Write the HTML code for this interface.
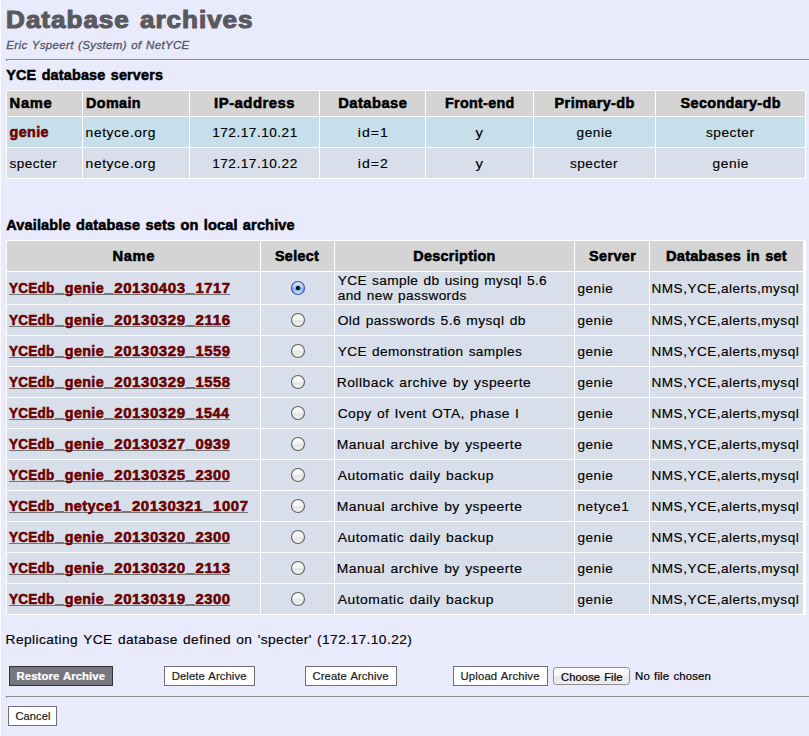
<!DOCTYPE html>
<html><head><meta charset="utf-8"><title>Database archives</title>
<style>
html,body{margin:0;padding:0;background:#EAEAFD;width:809px;height:736px;overflow:hidden;}
svg{display:block;position:absolute;left:0;top:0;}
text{font-family:"Liberation Sans", sans-serif;}
</style></head>
<body>
<svg width="809" height="736" viewBox="0 0 809 736">
<defs>
<linearGradient id="rsel" x1="0" y1="0" x2="0" y2="1">
<stop offset="0" stop-color="#DCEEFF"/><stop offset="0.4" stop-color="#A6D0FA"/><stop offset="0.55" stop-color="#78B4EE"/><stop offset="1" stop-color="#C8F2FF"/>
</linearGradient>
<linearGradient id="rnorm" x1="0" y1="0" x2="0" y2="1">
<stop offset="0" stop-color="#FFFFFF"/><stop offset="0.5" stop-color="#F2F2F2"/><stop offset="0.55" stop-color="#E4E4E4"/><stop offset="1" stop-color="#F4F4F4"/>
</linearGradient>
<linearGradient id="cf" x1="0" y1="0" x2="0" y2="1">
<stop offset="0" stop-color="#FFFFFF"/><stop offset="0.5" stop-color="#F4F4F4"/><stop offset="0.55" stop-color="#E6E6E6"/><stop offset="1" stop-color="#EFEFEF"/>
</linearGradient>
</defs>
<rect x="0" y="0" width="1" height="736" fill="#FBFBFF"/>
<rect x="6" y="59" width="803" height="1" fill="#8A8A8A"/>
<rect x="7" y="60" width="802" height="1" fill="#EDEDF0"/>
<rect x="6" y="60" width="1" height="1" fill="#8A8A8A"/>
<rect x="6" y="90" width="800" height="89" fill="#FFFFFF"/>
<rect x="7" y="91" width="75" height="25" fill="#D4D4D4"/>
<rect x="7" y="117" width="75" height="30" fill="#C6DFEB"/>
<rect x="7" y="148" width="75" height="30" fill="#D8DFEA"/>
<rect x="83" y="91" width="106" height="25" fill="#D4D4D4"/>
<rect x="83" y="117" width="106" height="30" fill="#C6DFEB"/>
<rect x="83" y="148" width="106" height="30" fill="#D8DFEA"/>
<rect x="190" y="91" width="129" height="25" fill="#D4D4D4"/>
<rect x="190" y="117" width="129" height="30" fill="#C6DFEB"/>
<rect x="190" y="148" width="129" height="30" fill="#D8DFEA"/>
<rect x="320" y="91" width="105" height="25" fill="#D4D4D4"/>
<rect x="320" y="117" width="105" height="30" fill="#C6DFEB"/>
<rect x="320" y="148" width="105" height="30" fill="#D8DFEA"/>
<rect x="426" y="91" width="107" height="25" fill="#D4D4D4"/>
<rect x="426" y="117" width="107" height="30" fill="#C6DFEB"/>
<rect x="426" y="148" width="107" height="30" fill="#D8DFEA"/>
<rect x="534" y="91" width="121" height="25" fill="#D4D4D4"/>
<rect x="534" y="117" width="121" height="30" fill="#C6DFEB"/>
<rect x="534" y="148" width="121" height="30" fill="#D8DFEA"/>
<rect x="656" y="91" width="149" height="25" fill="#D4D4D4"/>
<rect x="656" y="117" width="149" height="30" fill="#C6DFEB"/>
<rect x="656" y="148" width="149" height="30" fill="#D8DFEA"/>
<rect x="6" y="240" width="800" height="375" fill="#FFFFFF"/>
<rect x="7" y="241" width="253" height="30" fill="#D4D4D4"/>
<rect x="7" y="272" width="253" height="32" fill="#D8DFEA"/>
<rect x="7" y="305" width="253" height="30" fill="#D8DFEA"/>
<rect x="7" y="336" width="253" height="30" fill="#D8DFEA"/>
<rect x="7" y="367" width="253" height="30" fill="#D8DFEA"/>
<rect x="7" y="398" width="253" height="30" fill="#D8DFEA"/>
<rect x="7" y="429" width="253" height="30" fill="#D8DFEA"/>
<rect x="7" y="460" width="253" height="30" fill="#D8DFEA"/>
<rect x="7" y="491" width="253" height="30" fill="#D8DFEA"/>
<rect x="7" y="522" width="253" height="30" fill="#D8DFEA"/>
<rect x="7" y="553" width="253" height="30" fill="#D8DFEA"/>
<rect x="7" y="584" width="253" height="30" fill="#D8DFEA"/>
<rect x="261" y="241" width="73" height="30" fill="#D4D4D4"/>
<rect x="261" y="272" width="73" height="32" fill="#D8DFEA"/>
<rect x="261" y="305" width="73" height="30" fill="#D8DFEA"/>
<rect x="261" y="336" width="73" height="30" fill="#D8DFEA"/>
<rect x="261" y="367" width="73" height="30" fill="#D8DFEA"/>
<rect x="261" y="398" width="73" height="30" fill="#D8DFEA"/>
<rect x="261" y="429" width="73" height="30" fill="#D8DFEA"/>
<rect x="261" y="460" width="73" height="30" fill="#D8DFEA"/>
<rect x="261" y="491" width="73" height="30" fill="#D8DFEA"/>
<rect x="261" y="522" width="73" height="30" fill="#D8DFEA"/>
<rect x="261" y="553" width="73" height="30" fill="#D8DFEA"/>
<rect x="261" y="584" width="73" height="30" fill="#D8DFEA"/>
<rect x="335" y="241" width="239" height="30" fill="#D4D4D4"/>
<rect x="335" y="272" width="239" height="32" fill="#D8DFEA"/>
<rect x="335" y="305" width="239" height="30" fill="#D8DFEA"/>
<rect x="335" y="336" width="239" height="30" fill="#D8DFEA"/>
<rect x="335" y="367" width="239" height="30" fill="#D8DFEA"/>
<rect x="335" y="398" width="239" height="30" fill="#D8DFEA"/>
<rect x="335" y="429" width="239" height="30" fill="#D8DFEA"/>
<rect x="335" y="460" width="239" height="30" fill="#D8DFEA"/>
<rect x="335" y="491" width="239" height="30" fill="#D8DFEA"/>
<rect x="335" y="522" width="239" height="30" fill="#D8DFEA"/>
<rect x="335" y="553" width="239" height="30" fill="#D8DFEA"/>
<rect x="335" y="584" width="239" height="30" fill="#D8DFEA"/>
<rect x="575" y="241" width="74" height="30" fill="#D4D4D4"/>
<rect x="575" y="272" width="74" height="32" fill="#D8DFEA"/>
<rect x="575" y="305" width="74" height="30" fill="#D8DFEA"/>
<rect x="575" y="336" width="74" height="30" fill="#D8DFEA"/>
<rect x="575" y="367" width="74" height="30" fill="#D8DFEA"/>
<rect x="575" y="398" width="74" height="30" fill="#D8DFEA"/>
<rect x="575" y="429" width="74" height="30" fill="#D8DFEA"/>
<rect x="575" y="460" width="74" height="30" fill="#D8DFEA"/>
<rect x="575" y="491" width="74" height="30" fill="#D8DFEA"/>
<rect x="575" y="522" width="74" height="30" fill="#D8DFEA"/>
<rect x="575" y="553" width="74" height="30" fill="#D8DFEA"/>
<rect x="575" y="584" width="74" height="30" fill="#D8DFEA"/>
<rect x="650" y="241" width="153" height="30" fill="#D4D4D4"/>
<rect x="650" y="272" width="153" height="32" fill="#D8DFEA"/>
<rect x="650" y="305" width="153" height="30" fill="#D8DFEA"/>
<rect x="650" y="336" width="153" height="30" fill="#D8DFEA"/>
<rect x="650" y="367" width="153" height="30" fill="#D8DFEA"/>
<rect x="650" y="398" width="153" height="30" fill="#D8DFEA"/>
<rect x="650" y="429" width="153" height="30" fill="#D8DFEA"/>
<rect x="650" y="460" width="153" height="30" fill="#D8DFEA"/>
<rect x="650" y="491" width="153" height="30" fill="#D8DFEA"/>
<rect x="650" y="522" width="153" height="30" fill="#D8DFEA"/>
<rect x="650" y="553" width="153" height="30" fill="#D8DFEA"/>
<rect x="650" y="584" width="153" height="30" fill="#D8DFEA"/>
<rect x="9" y="294" width="221" height="1" fill="#747474"/>
<rect x="55.0" y="293" width="9.1" height="2" fill="#757575"/>
<rect x="104.1" y="293" width="9.4" height="2" fill="#757575"/>
<rect x="185.6" y="293" width="9.2" height="2" fill="#757575"/>
<circle cx="298" cy="288.0" r="6.5" fill="url(#rsel)" stroke="#4A4A8E" stroke-width="1.1"/>
<circle cx="298" cy="288.0" r="2.2" fill="#0A0A14"/>
<rect x="9" y="326" width="221" height="1" fill="#747474"/>
<rect x="55.0" y="325" width="9.1" height="2" fill="#757575"/>
<rect x="104.1" y="325" width="9.4" height="2" fill="#757575"/>
<rect x="185.6" y="325" width="9.2" height="2" fill="#757575"/>
<circle cx="298" cy="320.0" r="6.5" fill="url(#rnorm)" stroke="#616161" stroke-width="1.1"/>
<rect x="9" y="357" width="221" height="1" fill="#747474"/>
<rect x="55.0" y="356" width="9.1" height="2" fill="#757575"/>
<rect x="104.1" y="356" width="9.4" height="2" fill="#757575"/>
<rect x="185.6" y="356" width="9.2" height="2" fill="#757575"/>
<circle cx="298" cy="351.0" r="6.5" fill="url(#rnorm)" stroke="#616161" stroke-width="1.1"/>
<rect x="9" y="388" width="221" height="1" fill="#747474"/>
<rect x="55.0" y="387" width="9.1" height="2" fill="#757575"/>
<rect x="104.1" y="387" width="9.4" height="2" fill="#757575"/>
<rect x="185.6" y="387" width="9.2" height="2" fill="#757575"/>
<circle cx="298" cy="382.0" r="6.5" fill="url(#rnorm)" stroke="#616161" stroke-width="1.1"/>
<rect x="9" y="419" width="221" height="1" fill="#747474"/>
<rect x="55.0" y="418" width="9.1" height="2" fill="#757575"/>
<rect x="104.1" y="418" width="9.4" height="2" fill="#757575"/>
<rect x="185.6" y="418" width="9.2" height="2" fill="#757575"/>
<circle cx="298" cy="413.0" r="6.5" fill="url(#rnorm)" stroke="#616161" stroke-width="1.1"/>
<rect x="9" y="450" width="221" height="1" fill="#747474"/>
<rect x="55.0" y="449" width="9.1" height="2" fill="#757575"/>
<rect x="104.1" y="449" width="9.4" height="2" fill="#757575"/>
<rect x="185.6" y="449" width="9.2" height="2" fill="#757575"/>
<circle cx="298" cy="444.0" r="6.5" fill="url(#rnorm)" stroke="#616161" stroke-width="1.1"/>
<rect x="9" y="481" width="221" height="1" fill="#747474"/>
<rect x="55.0" y="480" width="9.1" height="2" fill="#757575"/>
<rect x="104.1" y="480" width="9.4" height="2" fill="#757575"/>
<rect x="185.6" y="480" width="9.2" height="2" fill="#757575"/>
<circle cx="298" cy="475.0" r="6.5" fill="url(#rnorm)" stroke="#616161" stroke-width="1.1"/>
<rect x="9" y="512" width="239" height="1" fill="#747474"/>
<rect x="55.0" y="511" width="8.8" height="2" fill="#757575"/>
<rect x="121.5" y="511" width="9.8" height="2" fill="#757575"/>
<rect x="202.7" y="511" width="9.7" height="2" fill="#757575"/>
<circle cx="298" cy="506.0" r="6.5" fill="url(#rnorm)" stroke="#616161" stroke-width="1.1"/>
<rect x="9" y="543" width="221" height="1" fill="#747474"/>
<rect x="55.0" y="542" width="9.1" height="2" fill="#757575"/>
<rect x="104.1" y="542" width="9.4" height="2" fill="#757575"/>
<rect x="185.6" y="542" width="9.2" height="2" fill="#757575"/>
<circle cx="298" cy="537.0" r="6.5" fill="url(#rnorm)" stroke="#616161" stroke-width="1.1"/>
<rect x="9" y="574" width="221" height="1" fill="#747474"/>
<rect x="55.0" y="573" width="9.1" height="2" fill="#757575"/>
<rect x="104.1" y="573" width="9.4" height="2" fill="#757575"/>
<rect x="185.6" y="573" width="9.2" height="2" fill="#757575"/>
<circle cx="298" cy="568.0" r="6.5" fill="url(#rnorm)" stroke="#616161" stroke-width="1.1"/>
<rect x="9" y="605" width="221" height="1" fill="#747474"/>
<rect x="55.0" y="604" width="9.1" height="2" fill="#757575"/>
<rect x="104.1" y="604" width="9.4" height="2" fill="#757575"/>
<rect x="185.6" y="604" width="9.2" height="2" fill="#757575"/>
<circle cx="298" cy="599.0" r="6.5" fill="url(#rnorm)" stroke="#616161" stroke-width="1.1"/>
<rect x="9.5" y="666.5" width="103" height="19" fill="#76767F" stroke="#333333" stroke-width="1"/>
<rect x="164.5" y="666.5" width="90" height="19" fill="#FFFFFF" stroke="#6E6E76" stroke-width="1"/>
<rect x="305.5" y="666.5" width="91" height="19" fill="#FFFFFF" stroke="#6E6E76" stroke-width="1"/>
<rect x="453.5" y="666.5" width="94" height="19" fill="#FFFFFF" stroke="#6E6E76" stroke-width="1"/>
<rect x="553.5" y="667.5" width="76" height="17" rx="3" ry="3" fill="url(#cf)" stroke="#8C8C8C" stroke-width="1"/>
<rect x="6" y="696" width="803" height="1" fill="#8A8A8A"/>
<rect x="7" y="697" width="802" height="1" fill="#EDEDF0"/>
<rect x="6" y="697" width="1" height="1" fill="#8A8A8A"/>
<rect x="8.5" y="706.5" width="48" height="19" fill="#FFFFFF" stroke="#6E6E76" stroke-width="1"/>
<text transform="translate(6.11 27.50) scale(1.0851 1.0)" font-size="24" font-weight="bold" fill="#59595F" stroke="#59595F" stroke-width="1.1" style="letter-spacing:0.914px;word-spacing:1.800px;">Database archives</text>
<text transform="translate(6.30 48.70) scale(1.0528 1.0)" font-size="11" font-style="italic" fill="#55555F" stroke="#55555F" stroke-width="0.3" style="letter-spacing:0.298px;word-spacing:0.825px;">Eric Yspeert (System) of NetYCE</text>
<text transform="translate(6.30 80.00) scale(1.1034 1.1)" font-size="13" font-weight="bold" fill="#000" stroke="#000" stroke-width="0.5" style="letter-spacing:0.186px;word-spacing:0.975px;">YCE database servers</text>
<text transform="translate(9.60 107.60) scale(1.1318 1.1)" font-size="13" font-weight="bold" fill="#000" stroke="#000" stroke-width="0.5" style="letter-spacing:0.585px;">Name</text>
<text transform="translate(86.00 107.60) scale(1.1022 1.1)" font-size="13" font-weight="bold" fill="#000" stroke="#000" stroke-width="0.5" style="letter-spacing:0.379px;">Domain</text>
<text transform="translate(214.10 107.60) scale(1.1485 1.1)" font-size="13" font-weight="bold" fill="#000" stroke="#000" stroke-width="0.5" style="letter-spacing:0.408px;">IP-address</text>
<text transform="translate(338.20 107.60) scale(1.1328 1.1)" font-size="13" font-weight="bold" fill="#000" stroke="#000" stroke-width="0.5" style="letter-spacing:0.413px;">Database</text>
<text transform="translate(445.00 107.60) scale(1.0990 1.1)" font-size="13" font-weight="bold" fill="#000" stroke="#000" stroke-width="0.5" style="letter-spacing:0.293px;">Front-end</text>
<text transform="translate(554.60 107.60) scale(1.1142 1.1)" font-size="13" font-weight="bold" fill="#000" stroke="#000" stroke-width="0.5" style="letter-spacing:0.335px;">Primary-db</text>
<text transform="translate(680.60 107.60) scale(1.1070 1.1)" font-size="13" font-weight="bold" fill="#000" stroke="#000" stroke-width="0.5" style="letter-spacing:0.327px;">Secondary-db</text>
<text transform="translate(9.60 136.80) scale(1.1033 1.1)" font-size="13" font-weight="bold" fill="#6B0000" stroke="#6B0000" stroke-width="0.5" style="letter-spacing:0.338px;">genie</text>
<text transform="translate(85.60 136.80) scale(1.0610 1.04)" font-size="13" fill="#000" stroke="#000" stroke-width="0.15" style="letter-spacing:0.580px;">netyce.org</text>
<text transform="translate(212.20 136.80) scale(1.0488 1.04)" font-size="13" fill="#000" stroke="#000" stroke-width="0.15" style="letter-spacing:0.480px;">172.17.10.21</text>
<text transform="translate(357.70 136.80) scale(1.0856 1.04)" font-size="13" fill="#000" stroke="#000" stroke-width="0.15" style="letter-spacing:0.975px;">id=1</text>
<text transform="translate(475.48 136.80) scale(1.1500 1.04)" font-size="13" fill="#000" stroke="#000" stroke-width="0.15">y</text>
<text transform="translate(576.50 136.80) scale(1.0484 1.04)" font-size="13" fill="#000" stroke="#000" stroke-width="0.15" style="letter-spacing:0.547px;">genie</text>
<text transform="translate(705.90 136.80) scale(1.0508 1.04)" font-size="13" fill="#000" stroke="#000" stroke-width="0.15" style="letter-spacing:0.523px;">specter</text>
<text transform="translate(9.60 167.60) scale(1.0425 1.04)" font-size="13" fill="#000" stroke="#000" stroke-width="0.15" style="letter-spacing:0.441px;">specter</text>
<text transform="translate(85.60 167.60) scale(1.0610 1.04)" font-size="13" fill="#000" stroke="#000" stroke-width="0.15" style="letter-spacing:0.580px;">netyce.org</text>
<text transform="translate(212.20 167.60) scale(1.0488 1.04)" font-size="13" fill="#000" stroke="#000" stroke-width="0.15" style="letter-spacing:0.480px;">172.17.10.22</text>
<text transform="translate(357.70 167.60) scale(1.0856 1.04)" font-size="13" fill="#000" stroke="#000" stroke-width="0.15" style="letter-spacing:0.975px;">id=2</text>
<text transform="translate(475.48 167.60) scale(1.1500 1.04)" font-size="13" fill="#000" stroke="#000" stroke-width="0.15">y</text>
<text transform="translate(570.00 167.60) scale(1.0462 1.04)" font-size="13" fill="#000" stroke="#000" stroke-width="0.15" style="letter-spacing:0.478px;">specter</text>
<text transform="translate(712.40 167.60) scale(1.0535 1.04)" font-size="13" fill="#000" stroke="#000" stroke-width="0.15" style="letter-spacing:0.601px;">genie</text>
<text transform="translate(6.20 229.80) scale(1.1151 1.1)" font-size="13" font-weight="bold" fill="#000" stroke="#000" stroke-width="0.5" style="letter-spacing:0.156px;word-spacing:0.975px;">Available database sets on local archive</text>
<text transform="translate(112.50 260.80) scale(1.1318 1.1)" font-size="13" font-weight="bold" fill="#000" stroke="#000" stroke-width="0.5" style="letter-spacing:0.585px;">Name</text>
<text transform="translate(275.00 260.80) scale(1.0993 1.1)" font-size="13" font-weight="bold" fill="#000" stroke="#000" stroke-width="0.5" style="letter-spacing:0.302px;">Select</text>
<text transform="translate(413.30 260.80) scale(1.1039 1.1)" font-size="13" font-weight="bold" fill="#000" stroke="#000" stroke-width="0.5" style="letter-spacing:0.289px;">Description</text>
<text transform="translate(589.00 260.80) scale(1.1105 1.1)" font-size="13" font-weight="bold" fill="#000" stroke="#000" stroke-width="0.5" style="letter-spacing:0.345px;">Server</text>
<text transform="translate(666.10 260.80) scale(1.1235 1.1)" font-size="13" font-weight="bold" fill="#000" stroke="#000" stroke-width="0.5" style="letter-spacing:0.194px;word-spacing:0.975px;">Databases in set</text>
<text transform="translate(9.10 292.50) scale(1.0415 1.1)" font-size="13" font-weight="bold" fill="#6B0000" stroke="#6B0000" stroke-width="0.5" style="letter-spacing:0.182px;">YCEdb</text>
<text transform="translate(64.80 292.50) scale(1.1012 1.1)" font-size="13" font-weight="bold" fill="#6B0000" stroke="#6B0000" stroke-width="0.5" style="letter-spacing:0.332px;">genie</text>
<text transform="translate(114.20 292.50) scale(1.1591 1.1)" font-size="13" font-weight="bold" fill="#6B0000" stroke="#6B0000" stroke-width="0.5" style="letter-spacing:0.484px;">20130403</text>
<text transform="translate(195.50 292.50) scale(1.1369 1.1)" font-size="13" font-weight="bold" fill="#6B0000" stroke="#6B0000" stroke-width="0.5" style="letter-spacing:0.493px;">1717</text>
<text transform="translate(337.70 284.60) scale(1.0539 1.04)" font-size="13" fill="#000" stroke="#000" stroke-width="0.15" style="letter-spacing:0.330px;word-spacing:0.975px;">YCE sample db using mysql 5.6</text>
<text transform="translate(337.70 300.20) scale(1.0478 1.04)" font-size="13" fill="#000" stroke="#000" stroke-width="0.15" style="letter-spacing:0.372px;word-spacing:0.975px;">and new passwords</text>
<text transform="translate(577.40 292.50) scale(1.0459 1.04)" font-size="13" fill="#000" stroke="#000" stroke-width="0.15" style="letter-spacing:0.519px;">genie</text>
<text transform="translate(651.55 292.50) scale(1.0457 1.04)" font-size="13" fill="#000" stroke="#000" stroke-width="0.15" style="letter-spacing:0.453px;">NMS,YCE,alerts,mysql</text>
<text transform="translate(9.10 324.50) scale(1.0415 1.1)" font-size="13" font-weight="bold" fill="#6B0000" stroke="#6B0000" stroke-width="0.5" style="letter-spacing:0.182px;">YCEdb</text>
<text transform="translate(64.80 324.50) scale(1.1012 1.1)" font-size="13" font-weight="bold" fill="#6B0000" stroke="#6B0000" stroke-width="0.5" style="letter-spacing:0.332px;">genie</text>
<text transform="translate(114.20 324.50) scale(1.1591 1.1)" font-size="13" font-weight="bold" fill="#6B0000" stroke="#6B0000" stroke-width="0.5" style="letter-spacing:0.484px;">20130329</text>
<text transform="translate(195.50 324.50) scale(1.1583 1.1)" font-size="13" font-weight="bold" fill="#6B0000" stroke="#6B0000" stroke-width="0.5" style="letter-spacing:0.546px;">2116</text>
<text transform="translate(337.70 324.50) scale(1.0602 1.04)" font-size="13" fill="#000" stroke="#000" stroke-width="0.15" style="letter-spacing:0.399px;word-spacing:0.975px;">Old passwords 5.6 mysql db</text>
<text transform="translate(577.40 324.50) scale(1.0459 1.04)" font-size="13" fill="#000" stroke="#000" stroke-width="0.15" style="letter-spacing:0.519px;">genie</text>
<text transform="translate(651.55 324.50) scale(1.0457 1.04)" font-size="13" fill="#000" stroke="#000" stroke-width="0.15" style="letter-spacing:0.453px;">NMS,YCE,alerts,mysql</text>
<text transform="translate(9.10 355.50) scale(1.0415 1.1)" font-size="13" font-weight="bold" fill="#6B0000" stroke="#6B0000" stroke-width="0.5" style="letter-spacing:0.182px;">YCEdb</text>
<text transform="translate(64.80 355.50) scale(1.1012 1.1)" font-size="13" font-weight="bold" fill="#6B0000" stroke="#6B0000" stroke-width="0.5" style="letter-spacing:0.332px;">genie</text>
<text transform="translate(114.20 355.50) scale(1.1591 1.1)" font-size="13" font-weight="bold" fill="#6B0000" stroke="#6B0000" stroke-width="0.5" style="letter-spacing:0.484px;">20130329</text>
<text transform="translate(195.50 355.50) scale(1.1369 1.1)" font-size="13" font-weight="bold" fill="#6B0000" stroke="#6B0000" stroke-width="0.5" style="letter-spacing:0.493px;">1559</text>
<text transform="translate(337.70 355.50) scale(1.0473 1.04)" font-size="13" fill="#000" stroke="#000" stroke-width="0.15" style="letter-spacing:0.386px;word-spacing:0.975px;">YCE demonstration samples</text>
<text transform="translate(577.40 355.50) scale(1.0459 1.04)" font-size="13" fill="#000" stroke="#000" stroke-width="0.15" style="letter-spacing:0.519px;">genie</text>
<text transform="translate(651.55 355.50) scale(1.0457 1.04)" font-size="13" fill="#000" stroke="#000" stroke-width="0.15" style="letter-spacing:0.453px;">NMS,YCE,alerts,mysql</text>
<text transform="translate(9.10 386.50) scale(1.0415 1.1)" font-size="13" font-weight="bold" fill="#6B0000" stroke="#6B0000" stroke-width="0.5" style="letter-spacing:0.182px;">YCEdb</text>
<text transform="translate(64.80 386.50) scale(1.1012 1.1)" font-size="13" font-weight="bold" fill="#6B0000" stroke="#6B0000" stroke-width="0.5" style="letter-spacing:0.332px;">genie</text>
<text transform="translate(114.20 386.50) scale(1.1591 1.1)" font-size="13" font-weight="bold" fill="#6B0000" stroke="#6B0000" stroke-width="0.5" style="letter-spacing:0.484px;">20130329</text>
<text transform="translate(195.50 386.50) scale(1.1369 1.1)" font-size="13" font-weight="bold" fill="#6B0000" stroke="#6B0000" stroke-width="0.5" style="letter-spacing:0.493px;">1558</text>
<text transform="translate(336.63 386.50) scale(1.0680 1.04)" font-size="13" fill="#000" stroke="#000" stroke-width="0.15" style="letter-spacing:0.475px;word-spacing:0.975px;">Rollback archive by yspeerte</text>
<text transform="translate(577.40 386.50) scale(1.0459 1.04)" font-size="13" fill="#000" stroke="#000" stroke-width="0.15" style="letter-spacing:0.519px;">genie</text>
<text transform="translate(651.55 386.50) scale(1.0457 1.04)" font-size="13" fill="#000" stroke="#000" stroke-width="0.15" style="letter-spacing:0.453px;">NMS,YCE,alerts,mysql</text>
<text transform="translate(9.10 417.50) scale(1.0415 1.1)" font-size="13" font-weight="bold" fill="#6B0000" stroke="#6B0000" stroke-width="0.5" style="letter-spacing:0.182px;">YCEdb</text>
<text transform="translate(64.80 417.50) scale(1.1012 1.1)" font-size="13" font-weight="bold" fill="#6B0000" stroke="#6B0000" stroke-width="0.5" style="letter-spacing:0.332px;">genie</text>
<text transform="translate(114.20 417.50) scale(1.1591 1.1)" font-size="13" font-weight="bold" fill="#6B0000" stroke="#6B0000" stroke-width="0.5" style="letter-spacing:0.484px;">20130329</text>
<text transform="translate(195.50 417.50) scale(1.1087 1.1)" font-size="13" font-weight="bold" fill="#6B0000" stroke="#6B0000" stroke-width="0.5" style="letter-spacing:0.416px;">1544</text>
<text transform="translate(337.70 417.50) scale(1.0659 1.04)" font-size="13" fill="#000" stroke="#000" stroke-width="0.15" style="letter-spacing:0.381px;word-spacing:0.975px;">Copy of Ivent OTA, phase I</text>
<text transform="translate(577.40 417.50) scale(1.0459 1.04)" font-size="13" fill="#000" stroke="#000" stroke-width="0.15" style="letter-spacing:0.519px;">genie</text>
<text transform="translate(651.55 417.50) scale(1.0457 1.04)" font-size="13" fill="#000" stroke="#000" stroke-width="0.15" style="letter-spacing:0.453px;">NMS,YCE,alerts,mysql</text>
<text transform="translate(9.10 448.50) scale(1.0415 1.1)" font-size="13" font-weight="bold" fill="#6B0000" stroke="#6B0000" stroke-width="0.5" style="letter-spacing:0.182px;">YCEdb</text>
<text transform="translate(64.80 448.50) scale(1.1012 1.1)" font-size="13" font-weight="bold" fill="#6B0000" stroke="#6B0000" stroke-width="0.5" style="letter-spacing:0.332px;">genie</text>
<text transform="translate(114.20 448.50) scale(1.1591 1.1)" font-size="13" font-weight="bold" fill="#6B0000" stroke="#6B0000" stroke-width="0.5" style="letter-spacing:0.484px;">20130327</text>
<text transform="translate(195.50 448.50) scale(1.1369 1.1)" font-size="13" font-weight="bold" fill="#6B0000" stroke="#6B0000" stroke-width="0.5" style="letter-spacing:0.493px;">0939</text>
<text transform="translate(336.63 448.50) scale(1.0666 1.04)" font-size="13" fill="#000" stroke="#000" stroke-width="0.15" style="letter-spacing:0.474px;word-spacing:0.975px;">Manual archive by yspeerte</text>
<text transform="translate(577.40 448.50) scale(1.0459 1.04)" font-size="13" fill="#000" stroke="#000" stroke-width="0.15" style="letter-spacing:0.519px;">genie</text>
<text transform="translate(651.55 448.50) scale(1.0457 1.04)" font-size="13" fill="#000" stroke="#000" stroke-width="0.15" style="letter-spacing:0.453px;">NMS,YCE,alerts,mysql</text>
<text transform="translate(9.10 479.50) scale(1.0415 1.1)" font-size="13" font-weight="bold" fill="#6B0000" stroke="#6B0000" stroke-width="0.5" style="letter-spacing:0.182px;">YCEdb</text>
<text transform="translate(64.80 479.50) scale(1.1012 1.1)" font-size="13" font-weight="bold" fill="#6B0000" stroke="#6B0000" stroke-width="0.5" style="letter-spacing:0.332px;">genie</text>
<text transform="translate(114.20 479.50) scale(1.1591 1.1)" font-size="13" font-weight="bold" fill="#6B0000" stroke="#6B0000" stroke-width="0.5" style="letter-spacing:0.484px;">20130325</text>
<text transform="translate(195.50 479.50) scale(1.1369 1.1)" font-size="13" font-weight="bold" fill="#6B0000" stroke="#6B0000" stroke-width="0.5" style="letter-spacing:0.493px;">2300</text>
<text transform="translate(337.70 479.50) scale(1.0661 1.04)" font-size="13" fill="#000" stroke="#000" stroke-width="0.15" style="letter-spacing:0.498px;word-spacing:0.975px;">Automatic daily backup</text>
<text transform="translate(577.40 479.50) scale(1.0459 1.04)" font-size="13" fill="#000" stroke="#000" stroke-width="0.15" style="letter-spacing:0.519px;">genie</text>
<text transform="translate(651.55 479.50) scale(1.0457 1.04)" font-size="13" fill="#000" stroke="#000" stroke-width="0.15" style="letter-spacing:0.453px;">NMS,YCE,alerts,mysql</text>
<text transform="translate(9.10 510.50) scale(1.0415 1.1)" font-size="13" font-weight="bold" fill="#6B0000" stroke="#6B0000" stroke-width="0.5" style="letter-spacing:0.182px;">YCEdb</text>
<text transform="translate(64.50 510.50) scale(1.1178 1.1)" font-size="13" font-weight="bold" fill="#6B0000" stroke="#6B0000" stroke-width="0.5" style="letter-spacing:0.363px;">netyce1</text>
<text transform="translate(132.00 510.50) scale(1.1505 1.1)" font-size="13" font-weight="bold" fill="#6B0000" stroke="#6B0000" stroke-width="0.5" style="letter-spacing:0.462px;">20130321</text>
<text transform="translate(213.10 510.50) scale(1.1466 1.1)" font-size="13" font-weight="bold" fill="#6B0000" stroke="#6B0000" stroke-width="0.5" style="letter-spacing:0.524px;">1007</text>
<text transform="translate(336.63 510.50) scale(1.0666 1.04)" font-size="13" fill="#000" stroke="#000" stroke-width="0.15" style="letter-spacing:0.474px;word-spacing:0.975px;">Manual archive by yspeerte</text>
<text transform="translate(577.40 510.50) scale(1.0521 1.04)" font-size="13" fill="#000" stroke="#000" stroke-width="0.15" style="letter-spacing:0.561px;">netyce1</text>
<text transform="translate(651.55 510.50) scale(1.0457 1.04)" font-size="13" fill="#000" stroke="#000" stroke-width="0.15" style="letter-spacing:0.453px;">NMS,YCE,alerts,mysql</text>
<text transform="translate(9.10 541.50) scale(1.0415 1.1)" font-size="13" font-weight="bold" fill="#6B0000" stroke="#6B0000" stroke-width="0.5" style="letter-spacing:0.182px;">YCEdb</text>
<text transform="translate(64.80 541.50) scale(1.1012 1.1)" font-size="13" font-weight="bold" fill="#6B0000" stroke="#6B0000" stroke-width="0.5" style="letter-spacing:0.332px;">genie</text>
<text transform="translate(114.20 541.50) scale(1.1591 1.1)" font-size="13" font-weight="bold" fill="#6B0000" stroke="#6B0000" stroke-width="0.5" style="letter-spacing:0.484px;">20130320</text>
<text transform="translate(195.50 541.50) scale(1.1369 1.1)" font-size="13" font-weight="bold" fill="#6B0000" stroke="#6B0000" stroke-width="0.5" style="letter-spacing:0.493px;">2300</text>
<text transform="translate(337.70 541.50) scale(1.0661 1.04)" font-size="13" fill="#000" stroke="#000" stroke-width="0.15" style="letter-spacing:0.498px;word-spacing:0.975px;">Automatic daily backup</text>
<text transform="translate(577.40 541.50) scale(1.0459 1.04)" font-size="13" fill="#000" stroke="#000" stroke-width="0.15" style="letter-spacing:0.519px;">genie</text>
<text transform="translate(651.55 541.50) scale(1.0457 1.04)" font-size="13" fill="#000" stroke="#000" stroke-width="0.15" style="letter-spacing:0.453px;">NMS,YCE,alerts,mysql</text>
<text transform="translate(9.10 572.50) scale(1.0415 1.1)" font-size="13" font-weight="bold" fill="#6B0000" stroke="#6B0000" stroke-width="0.5" style="letter-spacing:0.182px;">YCEdb</text>
<text transform="translate(64.80 572.50) scale(1.1012 1.1)" font-size="13" font-weight="bold" fill="#6B0000" stroke="#6B0000" stroke-width="0.5" style="letter-spacing:0.332px;">genie</text>
<text transform="translate(114.20 572.50) scale(1.1591 1.1)" font-size="13" font-weight="bold" fill="#6B0000" stroke="#6B0000" stroke-width="0.5" style="letter-spacing:0.484px;">20130320</text>
<text transform="translate(195.50 572.50) scale(1.1583 1.1)" font-size="13" font-weight="bold" fill="#6B0000" stroke="#6B0000" stroke-width="0.5" style="letter-spacing:0.546px;">2113</text>
<text transform="translate(336.63 572.50) scale(1.0666 1.04)" font-size="13" fill="#000" stroke="#000" stroke-width="0.15" style="letter-spacing:0.474px;word-spacing:0.975px;">Manual archive by yspeerte</text>
<text transform="translate(577.40 572.50) scale(1.0459 1.04)" font-size="13" fill="#000" stroke="#000" stroke-width="0.15" style="letter-spacing:0.519px;">genie</text>
<text transform="translate(651.55 572.50) scale(1.0457 1.04)" font-size="13" fill="#000" stroke="#000" stroke-width="0.15" style="letter-spacing:0.453px;">NMS,YCE,alerts,mysql</text>
<text transform="translate(9.10 603.50) scale(1.0415 1.1)" font-size="13" font-weight="bold" fill="#6B0000" stroke="#6B0000" stroke-width="0.5" style="letter-spacing:0.182px;">YCEdb</text>
<text transform="translate(64.80 603.50) scale(1.1012 1.1)" font-size="13" font-weight="bold" fill="#6B0000" stroke="#6B0000" stroke-width="0.5" style="letter-spacing:0.332px;">genie</text>
<text transform="translate(114.20 603.50) scale(1.1591 1.1)" font-size="13" font-weight="bold" fill="#6B0000" stroke="#6B0000" stroke-width="0.5" style="letter-spacing:0.484px;">20130319</text>
<text transform="translate(195.50 603.50) scale(1.1369 1.1)" font-size="13" font-weight="bold" fill="#6B0000" stroke="#6B0000" stroke-width="0.5" style="letter-spacing:0.493px;">2300</text>
<text transform="translate(337.70 603.50) scale(1.0661 1.04)" font-size="13" fill="#000" stroke="#000" stroke-width="0.15" style="letter-spacing:0.498px;word-spacing:0.975px;">Automatic daily backup</text>
<text transform="translate(577.40 603.50) scale(1.0459 1.04)" font-size="13" fill="#000" stroke="#000" stroke-width="0.15" style="letter-spacing:0.519px;">genie</text>
<text transform="translate(651.55 603.50) scale(1.0457 1.04)" font-size="13" fill="#000" stroke="#000" stroke-width="0.15" style="letter-spacing:0.453px;">NMS,YCE,alerts,mysql</text>
<text transform="translate(5.54 643.50) scale(1.0580 1.04)" font-size="13" fill="#000" stroke="#000" stroke-width="0.15" style="letter-spacing:0.394px;word-spacing:0.975px;">Replicating YCE database defined on 'specter' (172.17.10.22)</text>
<text transform="translate(16.60 679.90) scale(1.0270 1.0)" font-size="11" font-weight="bold" fill="#FFFFFF" stroke="#FFFFFF" stroke-width="0.25" style="letter-spacing:0.099px;word-spacing:0.825px;">Restore Archive</text>
<text transform="translate(171.70 679.90) scale(1.0223 1.05)" font-size="11" fill="#1A1A1A" stroke="#1A1A1A" stroke-width="0.2" style="letter-spacing:0.116px;word-spacing:0.825px;">Delete Archive</text>
<text transform="translate(312.50 679.90) scale(1.0224 1.05)" font-size="11" fill="#1A1A1A" stroke="#1A1A1A" stroke-width="0.2" style="letter-spacing:0.120px;word-spacing:0.825px;">Create Archive</text>
<text transform="translate(460.50 679.90) scale(1.0275 1.05)" font-size="11" fill="#1A1A1A" stroke="#1A1A1A" stroke-width="0.2" style="letter-spacing:0.167px;word-spacing:0.825px;">Upload Archive</text>
<text transform="translate(561.00 680.50) scale(1.0193 1.05)" font-size="11" fill="#000" stroke="#000" stroke-width="0.2" style="letter-spacing:0.084px;word-spacing:0.825px;">Choose File</text>
<text transform="translate(635.10 680.20) scale(1.0351 1.05)" font-size="11" fill="#000" stroke="#000" stroke-width="0.2" style="letter-spacing:0.146px;word-spacing:0.825px;">No file chosen</text>
<text transform="translate(15.40 719.90) scale(1.0095 1.05)" font-size="11" fill="#1A1A1A" stroke="#1A1A1A" stroke-width="0.2" style="letter-spacing:0.095px;">Cancel</text>
</svg>
</body></html>
